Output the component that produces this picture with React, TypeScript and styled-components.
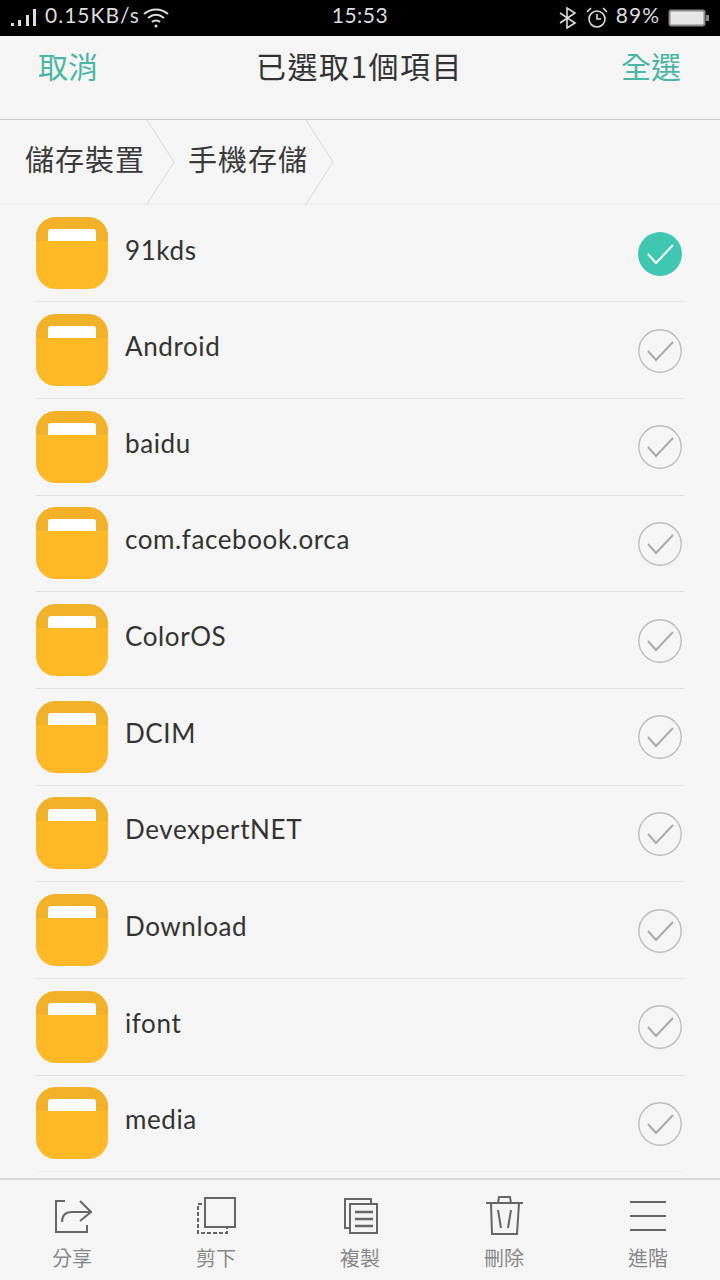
import React from 'react'
import styled, { createGlobalStyle } from 'styled-components'

const GlobalStyle = createGlobalStyle`
  html, body {
    margin: 0;
    padding: 0;
    background: #f5f5f5;
  }
  * {
    box-sizing: border-box;
  }
`

const FONT = `"Noto Sans CJK TC", "Noto Sans", sans-serif`

const Page = styled.div`
  width: 720px;
  height: 1280px;
  display: flex;
  flex-direction: column;
  overflow: hidden;
  background: #f5f5f5;
  font-family: ${FONT};
  color: #333;
`

const StatusBar = styled.div`
  height: 36px;
  flex: none;
  background: #000;
  color: #ddd;
  display: grid;
  grid-template-columns: 1fr auto 1fr;
  align-items: center;
  padding: 0 10px 0 10px;
  font-family: "Lato", sans-serif;
  font-size: 21px;
`

const StatusLeft = styled.div`
  display: flex;
  align-items: center;
  gap: 7px;
`

const WifiIcon = styled.svg`
  margin-left: -4px;
`

const StatusRight = styled.div`
  display: flex;
  align-items: center;
  justify-content: flex-end;
  gap: 8px;
`

const StatusText = styled.span<{ $spacing?: number }>`
  letter-spacing: ${p => p.$spacing ?? 1}px;
  line-height: 30px;
  margin-bottom: 6px;
`

const Header = styled.div`
  height: 84px;
  flex: none;
  border-bottom: 1px solid #c9c9c9;
  display: flex;
  justify-content: space-between;
  align-items: flex-start;
  padding: 6px 39px 0 38px;
`

const HeaderAction = styled.div`
  font-size: 30px;
  line-height: 46px;
  color: #4cb6a4;
`

const HeaderTitle = styled.div`
  font-size: 30px;
  line-height: 46px;
  letter-spacing: 1.5px;
  color: #333;
`

const Breadcrumbs = styled.div`
  height: 85px;
  flex: none;
  display: flex;
  align-items: stretch;
  padding-left: 25px;
  border-bottom: 2px solid #efefef;
`

const Crumb = styled.div`
  display: flex;
  align-items: stretch;
  margin-right: 13px;
`

const CrumbLabel = styled.div<{ $width: number }>`
  width: ${p => p.$width}px;
  font-size: 29px;
  line-height: 76px;
  letter-spacing: 1px;
  white-space: nowrap;
  color: #3a3a3a;
`

const List = styled.div`
  flex: 1;
  min-height: 0;
  overflow: hidden;
  padding: 0.7px 36px 0;
`

const Row = styled.div`
  height: 96.667px;
  display: flex;
  align-items: center;
  border-bottom: 1px solid #e2e2e2;

  &:last-child {
    border-bottom-color: #efefef;
  }
`

const FolderIcon = styled.svg`
  width: 72px;
  height: 72px;
  flex: none;
  margin-top: -0.4px;
`

const FileName = styled.div`
  flex: 1;
  margin: -8px 0 0 17px;
  font-family: "Lato", sans-serif;
  font-size: 26px;
  letter-spacing: 0.6px;
  color: #333;
`

const Check = styled.svg`
  width: 44px;
  height: 44px;
  flex: none;
  margin: 1px 2px 0 0;
`

const Toolbar = styled.div`
  height: 102px;
  flex: none;
  border-top: 2px solid #d8d8d8;
  display: grid;
  grid-template-columns: repeat(5, 144px);
`

const Tool = styled.div`
  display: flex;
  flex-direction: column;
  align-items: center;
  padding-top: 16px;
`

const ToolIcon = styled.svg`
  width: 40px;
  height: 40px;
  fill: none;
  stroke: #666;
  stroke-width: 2;
`

const ToolLabel = styled.div`
  margin-top: 7px;
  font-size: 20px;
  line-height: 30px;
  color: #888;
`

const FILES = [
  '91kds',
  'Android',
  'baidu',
  'com.facebook.orca',
  'ColorOS',
  'DCIM',
  'DevexpertNET',
  'Download',
  'ifont',
  'media',
]

const Folder = () => (
  <FolderIcon viewBox="0 0 72 72">
    <rect width="72" height="72" rx="20" fill="#ffb927" />
    <path d="M0 24V20A20 20 0 0 1 20 0H52A20 20 0 0 1 72 20V24Z" fill="#f1b22a" />
    <path d="M12 24V15a3 3 0 0 1 3-3H57a3 3 0 0 1 3 3V24Z" fill="#fff" />
  </FolderIcon>
)

const CheckMark = ({ checked }: { checked: boolean }) => (
  <Check viewBox="0 0 44 44">
    {checked ? (
      <>
        <circle cx="22" cy="22" r="22" fill="#3fc7b1" />
        <path d="M10 22L18 31L35 13" fill="none" stroke="#fff" strokeWidth="2" />
      </>
    ) : (
      <>
        <circle cx="22" cy="22" r="21.2" fill="none" stroke="#bdbdbd" strokeWidth="1.4" />
        <path d="M10 22L18 31L35 13" fill="none" stroke="#aaa" strokeWidth="2" />
      </>
    )}
  </Check>
)

const Chevron = () => (
  <svg width="28" height="84" viewBox="0 0 28 84" fill="none">
    <path d="M0 0L27 42L0 84" stroke="#d9d9d9" strokeWidth="1" />
  </svg>
)

const TOOLS = [
  {
    label: '分享',
    icon: (
      <>
        <path d="M13 5H4V36H35V29" />
        <path d="M10 26C10 20 13 16 20 16H39M28 5L39 16L28 25" />
      </>
    ),
  },
  {
    label: '剪下',
    icon: (
      <>
        <rect x="9" y="2" width="30" height="29" />
        <path d="M6 8H2V37H31V32" strokeDasharray="4 2" />
      </>
    ),
  },
  {
    label: '複製',
    icon: (
      <>
        <path d="M9 32H5V3H31V8" />
        <path d="M10 8H37V37H10Z" />
        <path d="M15 16H33M15 23H33M15 30H33" strokeWidth="2.5" />
      </>
    ),
  },
  {
    label: '刪除',
    icon: (
      <>
        <path d="M2 7H39" />
        <path d="M14 7L15 1H26L27 7" />
        <path d="M7 7L8 38H33L35 7" />
        <path d="M14 14L17 32M27 14L24 32" />
      </>
    ),
  },
  {
    label: '進階',
    icon: <path d="M2 6H38M2 20H38M2 34H38" />,
  },
]

export default function App() {
  return (
    <Page>
      <GlobalStyle />
      <StatusBar>
        <StatusLeft>
          <svg width="28" height="20" viewBox="0 0 28 20" fill="#ddd">
            <rect x="1" y="15" width="3" height="3" />
            <rect x="8" y="12" width="3" height="6" />
            <rect x="16" y="7" width="3" height="11" />
            <rect x="23" y="1" width="3" height="17" />
          </svg>
          <StatusText>0.15KB/s</StatusText>
          <WifiIcon width="26" height="22" viewBox="0 0 26 22" fill="none" stroke="#ddd" strokeWidth="2">
            <path d="M1 7C8 1 18 1 25 7M5 11C10 7 16 7 21 11M9 15C11 13 15 13 17 15" />
            <circle cx="13" cy="19" r="1.5" fill="#ddd" stroke="none" />
          </WifiIcon>
        </StatusLeft>
        <StatusText $spacing={0.5}>15:53</StatusText>
        <StatusRight>
          <svg width="20" height="22" viewBox="0 0 20 22" fill="none" stroke="#ddd" strokeWidth="1.6">
            <path d="M2 6L17 16L9 21V1L17 6L2 16" />
          </svg>
          <svg width="22" height="22" viewBox="0 0 22 22" fill="none" stroke="#ddd" strokeWidth="1.6">
            <circle cx="11" cy="12" r="8" />
            <path d="M11 7V12H15M1 5L5 1M21 5L17 1" />
          </svg>
          <StatusText $spacing={1}>89%</StatusText>
          <svg width="42" height="20" viewBox="0 0 42 20">
            <rect x="1.5" y="2.5" width="35" height="15" rx="2" fill="#e6e6e6" stroke="#8a8a8a" strokeWidth="2" />
            <rect x="38" y="7" width="3" height="6" fill="#8a8a8a" />
          </svg>
        </StatusRight>
      </StatusBar>
      <Header>
        <HeaderAction>取消</HeaderAction>
        <HeaderTitle>已選取1個項目</HeaderTitle>
        <HeaderAction>全選</HeaderAction>
      </Header>
      <Breadcrumbs>
        <Crumb>
          <CrumbLabel $width={122}>儲存裝置</CrumbLabel>
          <Chevron />
        </Crumb>
        <Crumb>
          <CrumbLabel $width={118}>手機存儲</CrumbLabel>
          <Chevron />
        </Crumb>
      </Breadcrumbs>
      <List>
        {FILES.map((name, i) => (
          <Row key={name}>
            <Folder />
            <FileName>{name}</FileName>
            <CheckMark checked={i === 0} />
          </Row>
        ))}
      </List>
      <Toolbar>
        {TOOLS.map(tool => (
          <Tool key={tool.label}>
            <ToolIcon viewBox="0 0 40 40">{tool.icon}</ToolIcon>
            <ToolLabel>{tool.label}</ToolLabel>
          </Tool>
        ))}
      </Toolbar>
    </Page>
  )
}
